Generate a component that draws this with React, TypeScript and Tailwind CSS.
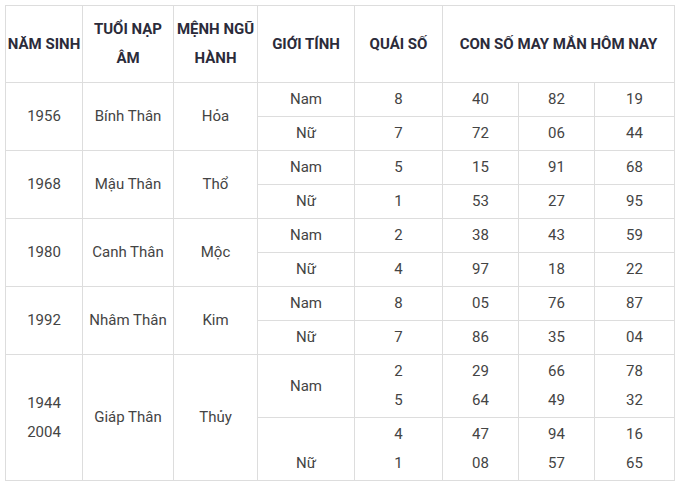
type Sub = { gender: string[]; quai: string[]; nums: string[][] };
type Group = { year: string[]; tuoi: string; menh: string; rows: Sub[]; tall?: boolean };

const groups: Group[] = [
  {
    year: ["1956"],
    tuoi: "Bính Thân",
    menh: "Hỏa",
    rows: [
      { gender: ["Nam"], quai: ["8"], nums: [["40"], ["82"], ["19"]] },
      { gender: ["Nữ"], quai: ["7"], nums: [["72"], ["06"], ["44"]] },
    ],
  },
  {
    year: ["1968"],
    tuoi: "Mậu Thân",
    menh: "Thổ",
    rows: [
      { gender: ["Nam"], quai: ["5"], nums: [["15"], ["91"], ["68"]] },
      { gender: ["Nữ"], quai: ["1"], nums: [["53"], ["27"], ["95"]] },
    ],
  },
  {
    year: ["1980"],
    tuoi: "Canh Thân",
    menh: "Mộc",
    rows: [
      { gender: ["Nam"], quai: ["2"], nums: [["38"], ["43"], ["59"]] },
      { gender: ["Nữ"], quai: ["4"], nums: [["97"], ["18"], ["22"]] },
    ],
  },
  {
    year: ["1992"],
    tuoi: "Nhâm Thân",
    menh: "Kim",
    rows: [
      { gender: ["Nam"], quai: ["8"], nums: [["05"], ["76"], ["87"]] },
      { gender: ["Nữ"], quai: ["7"], nums: [["86"], ["35"], ["04"]] },
    ],
  },
  {
    year: ["1944", "2004"],
    tuoi: "Giáp Thân",
    menh: "Thủy",
    tall: true,
    rows: [
      { gender: ["Nam"], quai: ["2", "5"], nums: [["29", "64"], ["66", "49"], ["78", "32"]] },
      { gender: ["\u00a0", "Nữ"], quai: ["4", "1"], nums: [["47", "08"], ["94", "57"], ["16", "65"]] },
    ],
  },
];

function Lines({ items }: { items: string[] }) {
  return (
    <>
      {items.map((t, i) => (
        <div key={i}>{t}</div>
      ))}
    </>
  );
}

const cell = "border border-[#dddddd] text-center align-middle p-0";

export default function App() {
  return (
    <div
      className="bg-white w-[676px] h-[484px] pt-[5px] pl-[5px]"
      style={{ fontFamily: "Roboto, 'Liberation Sans', sans-serif" }}
    >
      <table className="border-collapse table-fixed w-[669px] text-[15px] leading-[29px] text-[#444444]">
        <colgroup>
          <col className="w-[77px]" />
          <col className="w-[91px]" />
          <col className="w-[84px]" />
          <col className="w-[97px]" />
          <col className="w-[88px]" />
          <col className="w-[76px]" />
          <col className="w-[76px]" />
          <col className="w-[80px]" />
        </colgroup>
        <thead>
          <tr className="h-[77px] font-bold text-[#2b2b3a]">
            <th className={cell}>NĂM SINH</th>
            <th className={cell}>
              TUỔI NẠP
              <br />
              ÂM
            </th>
            <th className={cell}>
              MỆNH NGŨ
              <br />
              HÀNH
            </th>
            <th className={cell}>GIỚI TÍNH</th>
            <th className={cell}>QUÁI SỐ</th>
            <th className={cell} colSpan={3}>
              CON SỐ MAY MẮN HÔM NAY
            </th>
          </tr>
        </thead>
        <tbody>
          {groups.map((g) =>
            g.rows.map((r, ri) => (
              <tr key={g.tuoi + ri} className={g.tall ? "h-[63px]" : "h-[34px]"}>
                {ri === 0 && (
                  <>
                    <td className={cell} rowSpan={2}>
                      <Lines items={g.year} />
                    </td>
                    <td className={cell} rowSpan={2}>
                      {g.tuoi}
                    </td>
                    <td className={cell} rowSpan={2}>
                      {g.menh}
                    </td>
                  </>
                )}
                <td className={cell}>
                  <Lines items={r.gender} />
                </td>
                <td className={cell}>
                  <Lines items={r.quai} />
                </td>
                {r.nums.map((n, ni) => (
                  <td key={ni} className={cell}>
                    <Lines items={n} />
                  </td>
                ))}
              </tr>
            ))
          )}
        </tbody>
      </table>
    </div>
  );
}
